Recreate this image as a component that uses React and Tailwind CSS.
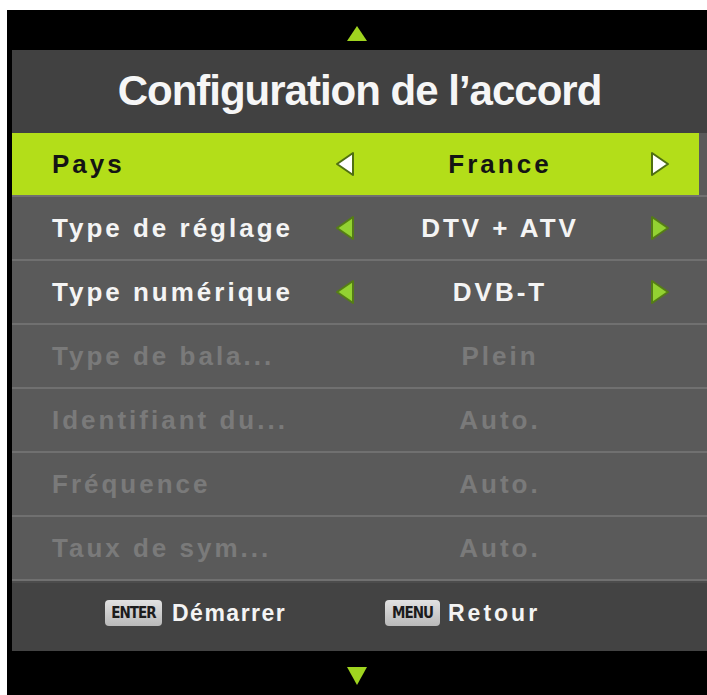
import React from 'react';

const font = { fontFamily: '"Liberation Sans", Arial, sans-serif' };

const rows = [
  { label: 'Pays', value: 'France', state: 'selected' },
  { label: 'Type de réglage', value: 'DTV + ATV', state: 'active' },
  { label: 'Type numérique', value: 'DVB-T', state: 'active' },
  { label: 'Type de bala...', value: 'Plein', state: 'disabled' },
  { label: 'Identifiant du...', value: 'Auto.', state: 'disabled' },
  { label: 'Fréquence', value: 'Auto.', state: 'disabled' },
  { label: 'Taux de sym...', value: 'Auto.', state: 'disabled' },
];

const Arrow = ({ dir, selected }) => {
  const fill = selected ? '#ffffff' : '#93d232';
  const stroke = selected ? '#4f6f12' : '#557d16';
  const points = dir === 'left' ? '19,2 19,24 3,13' : '3,2 3,24 19,13';
  return (
    <svg width="22" height="26" viewBox="0 0 22 26">
      <polygon points={points} fill={fill} stroke={stroke} strokeWidth="2" strokeLinejoin="round" />
    </svg>
  );
};

const Row = ({ label, value, state }) => {
  const selected = state === 'selected';
  const disabled = state === 'disabled';
  const textColor = selected ? 'text-[#141414]' : disabled ? 'text-[#7a7a7a]' : 'text-[#f4f4f4]';
  return (
    <div className="h-[64px] bg-[#5a5a5a] border-b-2 border-[#707070]">
      <div
        className={`h-[62px] flex items-center pl-[40px] ${selected ? 'bg-[#b3de19] mr-[8px]' : ''} ${textColor}`}
      >
        <div className="w-[278px] text-[26px] font-bold tracking-[3px] whitespace-nowrap">{label}</div>
        <div className="w-[30px] flex justify-center">{!disabled && <Arrow dir="left" selected={selected} />}</div>
        <div className="w-[280px] text-center text-[26px] font-bold tracking-[3px] whitespace-nowrap">{value}</div>
        <div className="w-[40px] flex justify-center">{!disabled && <Arrow dir="right" selected={selected} />}</div>
      </div>
    </div>
  );
};

const Badge = ({ children, w }) => (
  <span
    className={`${w} h-[26px] rounded-[4px] bg-gradient-to-b from-[#e2e2e2] to-[#b9b9b9] text-[#1c1c1c] text-[15px] font-bold flex items-center justify-center tracking-[-1px]`}
    style={{ fontFamily: '"DejaVu Sans Condensed", "DejaVu Sans", sans-serif' }}
  >
    {children}
  </span>
);

export default function App() {
  return (
    <div className="w-[707px] h-[695px] bg-white pl-[7px] pt-[10px]" style={font}>
      <div className="h-full bg-black flex flex-col">
        <div className="h-[40px] flex items-center justify-center pt-[6px]">
          <svg width="22" height="17" viewBox="0 0 22 17">
            <polygon points="11,1 21,16 1,16" fill="#9fd41f" />
          </svg>
        </div>

        <div className="pl-[5px] flex-1 flex flex-col">
          <div className="h-[83px] bg-[#414141] flex items-center justify-center pb-[2px]">
            <h1 className="text-[42px] font-bold text-[#f6f6f6] tracking-[-1px]">Configuration de l’accord</h1>
          </div>

          <div className="bg-[#5a5a5a]">
            {rows.map((r) => (
              <Row key={r.label} {...r} />
            ))}
          </div>
          <div className="h-[2px] bg-[#4c4c4c]" />

          <div className="h-[68px] bg-[#434343] flex items-center pl-[93px] pb-[8px]">
            <div className="w-[280px] flex items-center gap-[10px]">
              <Badge w="w-[57px]">ENTER</Badge>
              <span className="text-[23px] font-bold text-[#f4f4f4] tracking-[1.5px]">Démarrer</span>
            </div>
            <div className="flex items-center gap-[8px]">
              <Badge w="w-[55px]">MENU</Badge>
              <span className="text-[23px] font-bold text-[#f4f4f4] tracking-[3px]">Retour</span>
            </div>
          </div>
        </div>

        <div className="h-[42px] flex items-center justify-center pt-[4px]">
          <svg width="22" height="20" viewBox="0 0 22 20">
            <polygon points="1,1 21,1 11,19" fill="#9fd41f" />
          </svg>
        </div>
      </div>
    </div>
  );
}
